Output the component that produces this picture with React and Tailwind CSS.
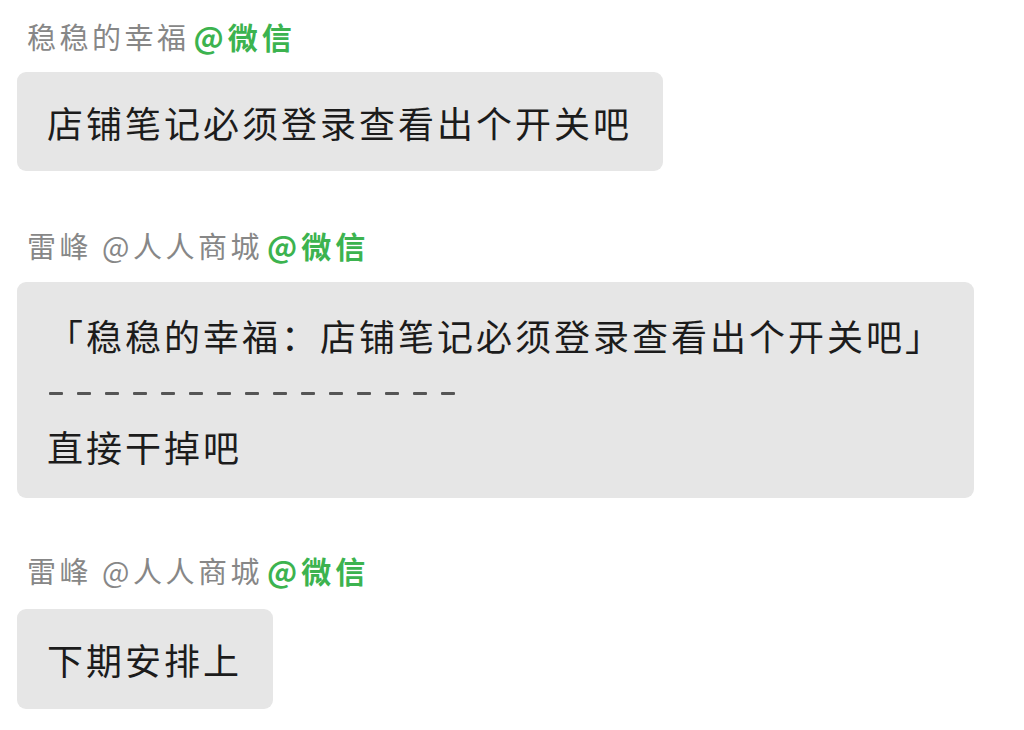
const font = { fontFamily: '"Noto Sans CJK SC", "Noto Sans", sans-serif' };

const Name = ({ name }) => (
  <div className="pl-[27px] text-[29px] leading-[34px] tracking-[3.5px] text-[#878787] whitespace-nowrap">
    {name}
    <span className="ml-[4px] text-[30px] font-bold text-[#3cb34f] tracking-[4px]">@微信</span>
  </div>
);

const Bubble = ({ children, className = "" }) => (
  <div
    className={`rounded-[9px] bg-[#e6e6e6] pl-[30px] text-[36px] tracking-[3px] text-[#1c1c1c] whitespace-nowrap ${className}`}
  >
    {children}
  </div>
);

export default function App() {
  return (
    <div className="w-[1024px] h-[730px] bg-white overflow-hidden flex flex-col" style={font}>
      <div className="mt-[19px]">
        <Name name="稳稳的幸福" />
      </div>
      <div className="mt-[19px] ml-[17px] flex">
        <Bubble className="w-[646px] h-[99px] flex items-center">店铺笔记必须登录查看出个开关吧</Bubble>
      </div>

      <div className="mt-[57px]">
        <Name name="雷峰 @人人商城" />
      </div>
      <div className="mt-[20px] ml-[17px] flex">
        <Bubble className="w-[957px] h-[216px] pt-[29px]">
          <div className="leading-[48px]">「稳稳的幸福：店铺笔记必须登录查看出个开关吧」</div>
          <div className="mt-[33px] ml-[2px] flex gap-[14px]">
            {Array.from({ length: 15 }).map((_, i) => (
              <div key={i} className="w-[14px] h-[3px] bg-[#555555] rounded-[1px]" />
            ))}
          </div>
          <div className="mt-[27px] leading-[48px]">直接干掉吧</div>
        </Bubble>
      </div>

      <div className="mt-[55px]">
        <Name name="雷峰 @人人商城" />
      </div>
      <div className="mt-[22px] ml-[17px] flex">
        <Bubble className="w-[256px] h-[100px] flex items-center">下期安排上</Bubble>
      </div>
    </div>
  );
}
